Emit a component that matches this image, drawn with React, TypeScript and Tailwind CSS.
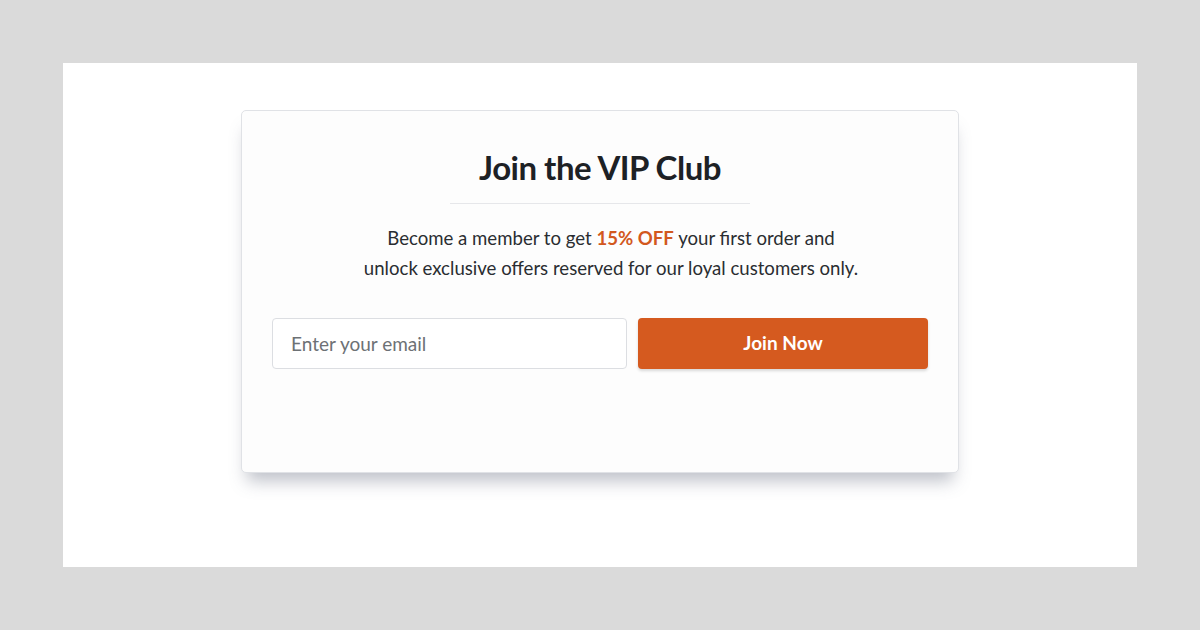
export default function App() {
  return (
    <div className="w-[1200px] h-[630px] bg-[#dadada] p-[63px] font-['Lato','Noto_Sans',sans-serif]">
      <div className="w-full h-full bg-white flex justify-center pt-[47px]">
        <div className="w-[718px] h-[363px] bg-[#fdfdfd] border border-[#e0e2e6] rounded-[5px] shadow-[0_14px_16px_-6px_rgba(110,118,135,0.45)] px-[30px] flex flex-col items-center">
          {/* Heading */}
          <h1 className="mt-[34px] text-[33px] leading-[44px] font-bold text-[#1d2125] tracking-[-0.5px]">
            Join the VIP Club
          </h1>
          <div className="mt-[14px] w-[300px] h-px bg-[#e6e7ea]" />

          {/* Offer text */}
          <p className="mt-[19px] ml-[22px] text-center text-[18.6px] leading-[30px] text-[#2a2d31]">
            Become a member to get <span className="font-bold text-[#d2581e]">15% OFF</span> your first order and
            <br />
            unlock exclusive offers reserved for our loyal customers only.
          </p>

          {/* Form */}
          <div className="mt-[35px] w-full flex gap-[11px]">
            <input
              type="email"
              placeholder="Enter your email"
              className="w-[355px] h-[51px] bg-white border border-[#dcdee2] rounded-[4px] px-[18px] text-[19px] text-[#333] placeholder:text-[#6d7175] outline-none"
            />
            <button className="flex-1 h-[51px] bg-[#d55a1f] rounded-[4px] text-white text-[19px] font-bold shadow-[0_2px_3px_rgba(0,0,0,0.15)]">
              Join Now
            </button>
          </div>
        </div>
      </div>
    </div>
  );
}
